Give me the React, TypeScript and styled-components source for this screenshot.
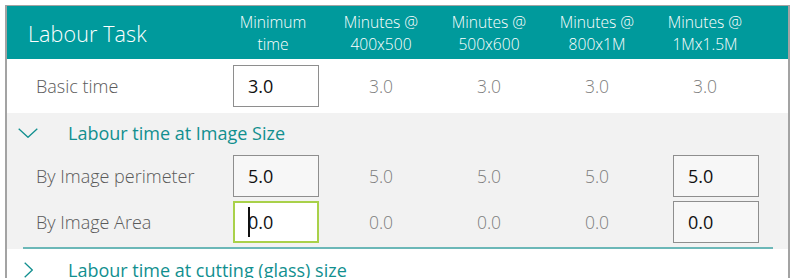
import React from 'react';
import styled, { createGlobalStyle } from 'styled-components';

const TEAL = '#009a9c';
const TEAL_TEXT = '#118f8f';
const COLS = '212px repeat(5, 108px) 1fr';

const Global = createGlobalStyle`
  html, body { margin: 0; padding: 0; background: #ffffff; }
  body { font-family: "Open Sans", "Noto Sans", "Liberation Sans", sans-serif; }
`;

const Frame = styled.div`
  box-sizing: border-box;
  margin: 5px 0 0 5px;
  width: 785px;
  height: 273px;
  overflow: hidden;
  border: 2px solid #a3a3a3;
  border-top-width: 1px;
  border-bottom: none;
`;

const Header = styled.div`
  display: grid;
  grid-template-columns: ${COLS};
  align-items: center;
  height: 53px;
  background: ${TEAL};
  color: #ffffff;
`;

const HeaderTitle = styled.div`
  padding-left: 21px;
  padding-top: 2px;
  font-size: 21.5px;
  font-weight: 300;
  letter-spacing: 0.1px;
`;

const HeaderCell = styled.div`
  text-align: center;
  font-size: 15.6px;
  line-height: 22px;
  font-weight: 300;
  white-space: pre-line;
  padding-top: 1px;
`;

const Row = styled.div<{ $h: number; $bg: string }>`
  display: grid;
  grid-template-columns: ${COLS};
  align-items: center;
  height: ${(p) => p.$h}px;
  background: ${(p) => p.$bg};
`;

const Label = styled.div`
  padding-left: 29px;
  font-size: 18px;
  color: #5a5a5a;
  font-weight: 300;
`;

const Value = styled.div`
  text-align: center;
  font-size: 17.5px;
  color: #7d7d7d;
  font-weight: 300;
`;

const Field = styled.div<{ $offset: number; $focused?: boolean; $bg: string }>`
  box-sizing: border-box;
  display: flex;
  align-items: center;
  margin-left: ${(p) => p.$offset}px;
  width: 86px;
  height: 42px;
  padding-left: ${(p) => (p.$focused ? 13 : 14)}px;
  background: ${(p) => (p.$focused ? '#ffffff' : p.$bg)};
  border: ${(p) => (p.$focused ? '2px solid #a9d14a' : '1px solid #8e8e8e')};
  font-size: 18px;
  color: #111111;
`;

const Caret = styled.span`
  display: inline-block;
  width: 1.5px;
  height: 30px;
  margin-right: -1.5px;
  background: #111111;
`;

const Group = styled.div<{ $bg: string }>`
  background: ${(p) => p.$bg};
`;

const GroupHeader = styled.div<{ $h: number }>`
  display: flex;
  align-items: center;
  height: ${(p) => p.$h}px;
  padding-left: 11px;
`;

const IconSlot = styled.div`
  display: flex;
  justify-content: center;
  align-items: center;
  width: 20px;
`;

const GroupTitle = styled.div`
  margin-left: 30px;
  font-size: 18px;
  color: ${TEAL_TEXT};
`;

const GroupBody = styled.div`
  padding-bottom: 2px;
`;

const Divider = styled.div`
  height: 2px;
  margin: 0 15px 0 16px;
  background: #6cb8b8;
`;

const ChevronDown = () => (
  <svg width="20" height="10" viewBox="0 0 20 10">
    <polyline points="0.7,0.7 10,9.3 19.3,0.7" fill="none" stroke={TEAL_TEXT} strokeWidth="1.3" />
  </svg>
);

const ChevronRight = () => (
  <svg width="9" height="16" viewBox="0 0 9 16">
    <polyline points="0.7,0.7 8.3,8 0.7,15.3" fill="none" stroke={TEAL_TEXT} strokeWidth="1.3" />
  </svg>
);

const columns = ['Minimum\ntime', 'Minutes @\n400x500', 'Minutes @\n500x600', 'Minutes @\n800x1M', 'Minutes @\n1Mx1.5M'];

type Cell = { kind: 'value' | 'field' | 'focus'; v: string };

const renderCells = (cells: Cell[], bg: string) =>
  cells.map((c, i) => {
    const offset = i === 0 ? 14 : 22;
    if (c.kind === 'value') return <Value key={i}>{c.v}</Value>;
    if (c.kind === 'focus')
      return (
        <Field key={i} $offset={offset} $focused $bg={bg}>
          <Caret />
          {c.v}
        </Field>
      );
    return (
      <Field key={i} $offset={offset} $bg={bg}>
        {c.v}
      </Field>
    );
  });

const v = (x: string): Cell => ({ kind: 'value', v: x });
const f = (x: string): Cell => ({ kind: 'field', v: x });
const fc = (x: string): Cell => ({ kind: 'focus', v: x });

export default function App() {
  return (
    <>
      <Global />
      <Frame>
        <Header>
          <HeaderTitle>Labour Task</HeaderTitle>
          {columns.map((c) => (
            <HeaderCell key={c}>{c}</HeaderCell>
          ))}
        </Header>
        <Row $h={54} $bg="#ffffff">
          <Label>Basic time</Label>
          {renderCells([f('3.0'), v('3.0'), v('3.0'), v('3.0'), v('3.0')], '#ffffff')}
        </Row>
        <Group $bg="#f2f2f2">
          <GroupHeader $h={40}>
            <IconSlot>
              <ChevronDown />
            </IconSlot>
            <GroupTitle>Labour time at Image Size</GroupTitle>
          </GroupHeader>
          <GroupBody>
            <Row $h={46} $bg="transparent">
              <Label>By Image perimeter</Label>
              {renderCells([f('5.0'), v('5.0'), v('5.0'), v('5.0'), f('5.0')], '#f7f7f7')}
            </Row>
            <Row $h={46} $bg="transparent">
              <Label>By Image Area</Label>
              {renderCells([fc('0.0'), v('0.0'), v('0.0'), v('0.0'), f('0.0')], '#f7f7f7')}
            </Row>
          </GroupBody>
          <Divider />
        </Group>
        <Group $bg="#ffffff">
          <GroupHeader $h={42}>
            <IconSlot>
              <ChevronRight />
            </IconSlot>
            <GroupTitle>Labour time at cutting (glass) size</GroupTitle>
          </GroupHeader>
        </Group>
      </Frame>
    </>
  );
}
